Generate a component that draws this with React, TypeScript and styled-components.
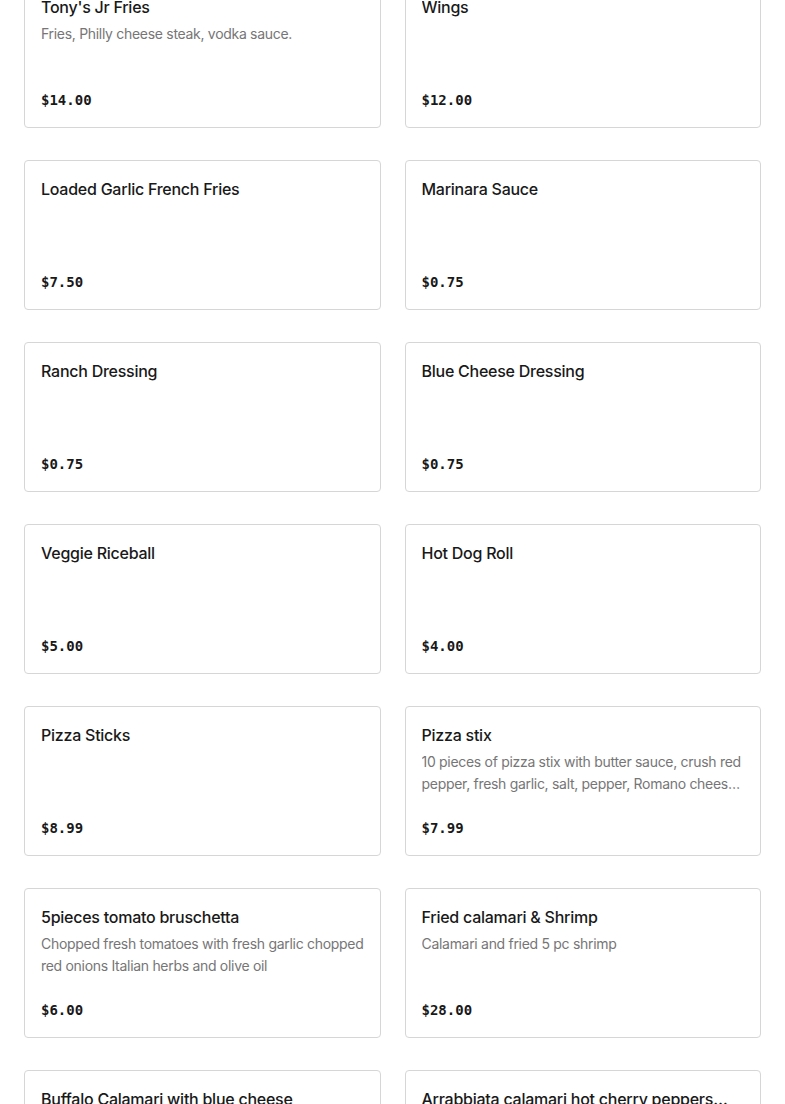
import React from 'react'
import styled, { createGlobalStyle } from 'styled-components'

type Item = {
  name: string
  description?: string
  price: string
}

const items: Item[] = [
  { name: "Tony's Jr Fries", description: 'Fries, Philly cheese steak, vodka sauce.', price: '$14.00' },
  { name: 'Wings', price: '$12.00' },
  { name: 'Loaded Garlic French Fries', price: '$7.50' },
  { name: 'Marinara Sauce', price: '$0.75' },
  { name: 'Ranch Dressing', price: '$0.75' },
  { name: 'Blue Cheese Dressing', price: '$0.75' },
  { name: 'Veggie Riceball', price: '$5.00' },
  { name: 'Hot Dog Roll', price: '$4.00' },
  { name: 'Pizza Sticks', price: '$8.99' },
  {
    name: 'Pizza stix',
    description:
      '10 pieces of pizza stix with butter sauce, crush red pepper, fresh garlic, salt, pepper, Romano cheese and parsley.',
    price: '$7.99',
  },
  {
    name: '5pieces tomato bruschetta',
    description: 'Chopped fresh tomatoes with fresh garlic chopped red onions Italian herbs and olive oil',
    price: '$6.00',
  },
  { name: 'Fried calamari & Shrimp', description: 'Calamari and fried 5 pc shrimp', price: '$28.00' },
  { name: 'Buffalo Calamari with blue cheese', price: '$18.00' },
  { name: 'Arrabbiata calamari hot cherry peppers and marinara', price: '$18.00' },
]

export default function App(): JSX.Element {
  return (
    <>
      <GlobalStyle />
      <Grid>
        {items.map((item) => (
          <Card key={item.name}>
            <Title>{item.name}</Title>
            {item.description && <Description>{item.description}</Description>}
            <Price>{item.price}</Price>
          </Card>
        ))}
      </Grid>
    </>
  )
}

const GlobalStyle = createGlobalStyle`
  html, body {
    margin: 0;
    padding: 0;
    background: #ffffff;
    overflow: hidden;
  }
  body {
    font-family: Inter, "Noto Sans", sans-serif;
    color: #191919;
  }
`

const Grid = styled.div`
  display: grid;
  grid-template-columns: 1fr 1fr;
  column-gap: 24px;
  row-gap: 32px;
  padding: 0 24px;
  margin-top: -22px;
`

const Card = styled.div`
  display: flex;
  flex-direction: column;
  box-sizing: border-box;
  height: 150px;
  padding: 16px;
  border: 1px solid #d6d6d6;
  border-radius: 4px;
  background: #ffffff;
  min-width: 0;
`

const Title = styled.div`
  font-size: 16px;
  font-weight: 500;
  line-height: 24px;
  letter-spacing: -0.25px;
  color: #191919;
  display: -webkit-box;
  -webkit-line-clamp: 1;
  -webkit-box-orient: vertical;
  overflow: hidden;
  flex-shrink: 0;
`

const Description = styled.div`
  margin-top: 4px;
  font-size: 14px;
  line-height: 22px;
  letter-spacing: -0.3px;
  color: #767676;
  display: -webkit-box;
  -webkit-line-clamp: 2;
  -webkit-box-orient: vertical;
  overflow: hidden;
  flex-shrink: 0;
`

const Price = styled.div`
  margin-top: auto;
  font-family: "DejaVu Sans Mono", "Liberation Mono", monospace;
  font-size: 14px;
  font-weight: 700;
  line-height: 22px;
  color: #191919;
`
